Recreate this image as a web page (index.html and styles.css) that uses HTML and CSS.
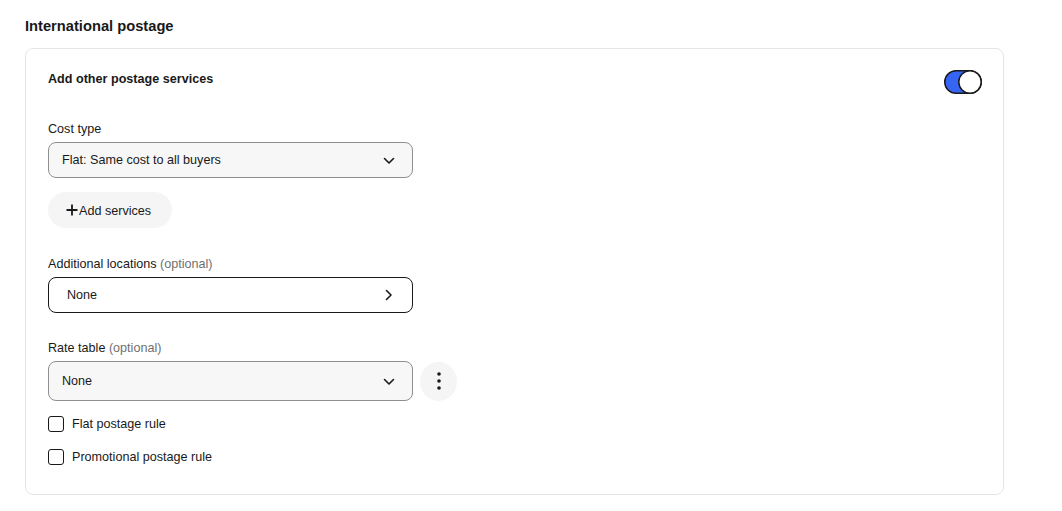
FILE: index.html
```html
<!DOCTYPE html>
<html lang="en">
<head>
<meta charset="utf-8">
<title>International postage</title>
<link rel="stylesheet" href="styles.css">
</head>
<body>
<div class="page">
  <h2 class="heading">International postage</h2>
  <section class="card">
    <div class="card-head">
      <div class="card-title">Add other postage services</div>
      <span class="toggle" role="switch" aria-checked="true">
        <svg width="38" height="24" viewBox="0 0 38 24">
          <rect x="0.75" y="0.75" width="36.5" height="22.5" rx="11.25" fill="#3665f3" stroke="#191919" stroke-width="1.5"/>
          <circle cx="26" cy="12" r="11.2" fill="#fff" stroke="#191919" stroke-width="1.5"/>
        </svg>
      </span>
    </div>

    <div class="field field-cost">
      <div class="label">Cost type</div>
      <div class="select">
        <span>Flat: Same cost to all buyers</span>
        <svg class="chev" width="12" height="8" viewBox="0 0 12 8"><path d="M1.5 1.5 L6 6 L10.5 1.5" fill="none" stroke="#191919" stroke-width="1.6" stroke-linecap="round" stroke-linejoin="round"/></svg>
      </div>
    </div>

    <button class="add-btn" type="button">
      <svg width="12" height="12" viewBox="0 0 12 12"><path d="M6 0.5 V11.5 M0.5 6 H11.5" stroke="#191919" stroke-width="1.8"/></svg>
      <span>Add services</span>
    </button>

    <div class="field field-loc">
      <div class="label">Additional locations <span class="opt">(optional)</span></div>
      <div class="picker">
        <span>None</span>
        <svg class="chev-r" width="8" height="12" viewBox="0 0 8 12"><path d="M1.5 1.5 L6 6 L1.5 10.5" fill="none" stroke="#191919" stroke-width="1.6" stroke-linecap="round" stroke-linejoin="round"/></svg>
      </div>
    </div>

    <div class="field field-rate">
      <div class="label">Rate table <span class="opt">(optional)</span></div>
      <div class="rate-row">
        <div class="select select-tall">
          <span>None</span>
          <svg class="chev" width="12" height="8" viewBox="0 0 12 8"><path d="M1.5 1.5 L6 6 L10.5 1.5" fill="none" stroke="#191919" stroke-width="1.6" stroke-linecap="round" stroke-linejoin="round"/></svg>
        </div>
        <button class="kebab" type="button" aria-label="More">
          <svg width="6" height="18" viewBox="0 0 6 18"><circle cx="3" cy="2" r="1.8" fill="#191919"/><circle cx="3" cy="9" r="1.8" fill="#191919"/><circle cx="3" cy="16" r="1.8" fill="#191919"/></svg>
        </button>
      </div>
    </div>

    <label class="check check-first"><span class="box"></span><span>Flat postage rule</span></label>
    <label class="check"><span class="box"></span><span>Promotional postage rule</span></label>
  </section>
</div>
</body>
</html>
```

FILE: styles.css
```css
* { box-sizing: border-box; }
html, body { margin: 0; padding: 0; background: #fff; }
body {
  font-family: "Liberation Sans", Arial, sans-serif;
  color: #191919;
  font-size: 12.6px;
}
.page {
  padding: 16px 25px 0 25px;
  width: 1029px;
}
.heading {
  margin: 0;
  font-size: 14.7px;
  line-height: 20px;
  font-weight: bold;
  color: #191919;
}
.card {
  margin-top: 12px;
  border: 1px solid #e5e5e5;
  border-radius: 8px;
  padding: 20px 21px 30px 22px;
  display: flex;
  flex-direction: column;
  align-items: flex-start;
  height: 447px;
}
.card-head {
  width: 100%;
  display: flex;
  justify-content: space-between;
  align-items: flex-start;
  height: 25px;
}
.card-title {
  font-weight: bold;
  font-size: 12.6px;
  line-height: 18px;
  padding-top: 1px;
}
.toggle {
  display: block;
  margin-top: 1px;
  height: 24px;
}
.toggle svg { display: block; }
.label {
  line-height: 18px;
  margin-bottom: 4px;
}
.opt { color: #707070; }
.field-cost { margin-top: 26px; }
.select {
  width: 365px;
  height: 36px;
  border: 1px solid #8f8f8f;
  border-radius: 8px;
  background: #f7f7f7;
  display: flex;
  align-items: center;
  justify-content: space-between;
  padding: 0 17px 0 13px;
}
.select-tall { height: 40px; }
.chev { display: block; margin-top: 1px; }
.add-btn {
  margin-top: 14px;
  height: 36px;
  width: 124px;
  border: 0;
  border-radius: 18px;
  background: #f5f5f5;
  display: flex;
  align-items: center;
  padding: 1px 0 0 18px;
  gap: 1px;
  font: inherit;
  color: #191919;
  flex-shrink: 0;
}
.add-btn svg { display: block; margin-top: -1px; }
.field-loc { margin-top: 27px; }
.picker {
  width: 365px;
  height: 36px;
  border: 1px solid #191919;
  border-radius: 8px;
  background: #fff;
  display: flex;
  align-items: center;
  justify-content: space-between;
  padding: 0 19px 0 18px;
}
.chev-r { display: block; }
.field-rate { margin-top: 26px; }
.rate-row {
  display: flex;
  align-items: center;
  gap: 7px;
}
.kebab {
  width: 37px;
  height: 39px;
  border: 0;
  border-radius: 50%;
  background: #f5f5f5;
  display: flex;
  align-items: center;
  justify-content: center;
  padding: 0;
}
.kebab svg { display: block; }
.check {
  display: flex;
  align-items: center;
  gap: 8px;
  line-height: 18px;
  flex-shrink: 0;
}
.field, .card-head { flex-shrink: 0; }
.check-first { margin-top: 14px; }
.check + .check { margin-top: 15px; }
.box {
  width: 16px;
  height: 16px;
  border: 1.5px solid #191919;
  border-radius: 3px;
  background: #fff;
  display: block;
}
```
